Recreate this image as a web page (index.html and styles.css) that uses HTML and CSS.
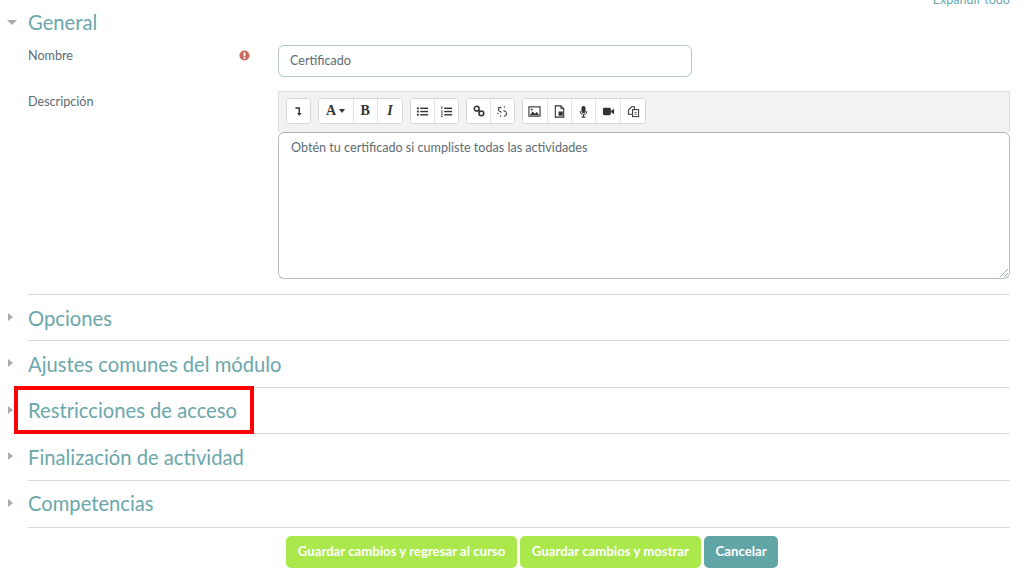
FILE: index.html
```html
<!DOCTYPE html>
<html lang="es">
<head>
<meta charset="utf-8">
<title>Certificado</title>
<link rel="stylesheet" href="styles.css">
</head>
<body>
<main class="page">
  <div class="expand"><a href="#">Expandir todo</a></div>

  <section class="sec open">
    <h2 class="sec-title"><span class="caret down"></span>General</h2>
    <div class="row row-name">
      <label class="lbl">Nombre</label>
      <span class="req"><svg viewBox="0 0 12 12" width="11" height="11"><circle cx="6" cy="6" r="5.5" fill="#ca6a5c"/><rect x="5" y="2.4" width="2" height="4.6" rx=".6" fill="#fff"/><rect x="5" y="8" width="2" height="1.8" rx=".5" fill="#fff"/></svg></span>
      <div class="field"><input class="text" type="text" value="Certificado"></div>
    </div>
    <div class="row row-desc">
      <label class="lbl">Descripción</label>
      <span class="req"></span>
      <div class="field editor">
        <div class="toolbar">
          <div class="grp">
            <button class="tb tb-one"><svg viewBox="0 0 14 14" width="12" height="12"><path d="M4 3.500h4.500v6.500" fill="none" stroke="#333" stroke-width="1.700"/><path d="M5.800 9.200h5.400L8.500 12.600z" fill="#333"/></svg></button>
          </div>
          <div class="grp">
            <button class="tb tb-wide"><span class="serif">A</span><i class="drop"></i></button>
            <button class="tb"><span class="serif bold">B</span></button>
            <button class="tb"><span class="serif ital">I</span></button>
          </div>
          <div class="grp">
            <button class="tb tb-pair"><svg viewBox="0 0 14 14" width="13" height="13"><g fill="#333"><rect x="1" y="2.500" width="2" height="2"/><rect x="1" y="6" width="2" height="2"/><rect x="1" y="9.500" width="2" height="2"/><rect x="4.500" y="2.800" width="8.500" height="1.500"/><rect x="4.500" y="6.300" width="8.500" height="1.500"/><rect x="4.500" y="9.800" width="8.500" height="1.500"/></g></svg></button>
            <button class="tb tb-pair"><svg viewBox="0 0 14 14" width="13" height="13"><g fill="#333"><rect x="1.500" y="1.500" width="1" height="3"/><rect x="1" y="6" width="2" height="1"/><rect x="1" y="8" width="2" height="1"/><rect x="1" y="10" width="2" height="1"/><rect x="1" y="12" width="2" height="1"/><rect x="4.500" y="2.800" width="8.500" height="1.500"/><rect x="4.500" y="6.300" width="8.500" height="1.500"/><rect x="4.500" y="9.800" width="8.500" height="1.500"/></g></svg></button>
          </div>
          <div class="grp">
            <button class="tb tb-pair"><svg viewBox="0 0 14 14" width="12" height="12"><g fill="none" stroke="#333" stroke-width="1.800"><circle cx="4.300" cy="4.300" r="2.800"/><circle cx="9.700" cy="9.700" r="2.800"/><path d="M5.500 5.500l3 3"/></g></svg></button>
            <button class="tb tb-pair"><svg viewBox="0 0 14 14" width="13" height="13"><g fill="none" stroke="#444" stroke-width="1.300"><path d="M3 6.500A2.700 2.700 0 0 1 5.800 2.500"/><path d="M11 8A2.700 2.700 0 0 1 8.500 12"/><path d="M8 6l3 1.500M6 8l-2.500-1.500"/><path d="M2 2l1.500 1M9 1v2M1 9h2M5 13v-2" stroke-width=".9"/></g></svg></button>
          </div>
          <div class="grp">
            <button class="tb"><svg viewBox="0 0 14 14" width="13" height="13"><rect x="1" y="2" width="12" height="10" fill="none" stroke="#333" stroke-width="1.200"/><path d="M2 11l3-4 2.500 2.500L9.500 7.500 12 11z" fill="#333"/><circle cx="4" cy="4.800" r="1" fill="#333"/></svg></button>
            <button class="tb"><svg viewBox="0 0 14 14" width="13" height="13"><path d="M2.500 1h6l3 3v9h-9z" fill="none" stroke="#333" stroke-width="1.200"/><rect x="6" y="7" width="4.500" height="4.500" fill="#333"/><path d="M8.500 1v3h3" fill="none" stroke="#333"/></svg></button>
            <button class="tb"><svg viewBox="0 0 14 14" width="13" height="13"><rect x="4.800" y="1" width="4.400" height="8" rx="2.200" fill="#333"/><path d="M3.300 6.500a3.700 3.700 0 0 0 7.400 0" fill="none" stroke="#333" stroke-width="1"/><path d="M7 10.500V13M5 13h4" stroke="#333" stroke-width="1.200"/></svg></button>
            <button class="tb"><svg viewBox="0 0 14 14" width="13" height="13"><rect x="1" y="3" width="8.500" height="8" rx="1.500" fill="#333"/><path d="M9.500 6.500L13 4v6L9.500 7.500z" fill="#333"/></svg></button>
            <button class="tb"><svg viewBox="0 0 14 14" width="13" height="13"><g fill="none" stroke="#333" stroke-width="1.100"><path d="M1.500 5.500L5 2h3v3.500"/><path d="M1.500 5.500V10h4"/><rect x="6" y="5" width="6.500" height="7.500"/><path d="M8 8h2.500M8 10h2.500" stroke-width=".8"/></g></svg></button>
          </div>
        </div>
        <div class="area">Obtén tu certificado si cumpliste todas las actividades<span class="grip"></span></div>
      </div>
    </div>
  </section>

  <section class="sec"><h2 class="sec-title"><span class="caret"></span>Opciones</h2></section>
  <section class="sec"><h2 class="sec-title"><span class="caret"></span>Ajustes comunes del módulo</h2></section>
  <section class="sec marked"><h2 class="sec-title"><span class="caret"></span>Restricciones de acceso</h2><span class="redbox"></span></section>
  <section class="sec"><h2 class="sec-title"><span class="caret"></span>Finalización de actividad</h2></section>
  <section class="sec last"><h2 class="sec-title"><span class="caret"></span>Competencias</h2></section>

  <div class="actions">
    <button class="btn green">Guardar cambios y regresar al curso</button>
    <button class="btn green">Guardar cambios y mostrar</button>
    <button class="btn teal">Cancelar</button>
  </div>
</main>
</body>
</html>
```
FILE: styles.css
```css
* { box-sizing: border-box; }
html, body { margin: 0; height: 584px; overflow: hidden; background: #fff; }
body { font-family: "Lato", "Noto Sans", sans-serif; color: #5d6b73; font-size: 13px; }
.page { padding: 0 14px 0 28px; }
.expand { height: 3px; text-align: right; line-height: 0; font-size: 12.600px; }
.expand a { color: #6aabb0; text-decoration: none; }
.sec { position: relative; height: 46.4px; border-bottom: 1px solid #d4dcdc; }
.sec.open { height: 292px; }
.sec-title { margin: 0; height: 46px; padding-bottom: 1px; display: flex; align-items: center; position: relative; font-size: 20.200px; font-weight: 400; color: #6ba7ab; white-space: nowrap; }
.sec.open .sec-title { height: 39px; padding-bottom: 2px; }
.caret { position: absolute; left: -20px; top: 50%; margin-top: -5px; width: 0; height: 0; border-left: 5px solid #a9adad; border-top: 4.500px solid transparent; border-bottom: 4.500px solid transparent; }
.caret.down { left: -21px; margin-top: -3px; border-top: 5px solid #a9adad; border-left: 5px solid transparent; border-right: 5px solid transparent; border-bottom: 0; }
.row { display: flex; align-items: flex-start; }
.row-name { height: 47px; margin-top: 3px; }
.lbl { width: 211px; font-size: 12.600px; line-height: 20px; margin-top: 1px; color: #5d6b73; }
.row-desc .lbl { margin-top: 0; }
.req { width: 39px; height: 20px; margin-top: 3px; line-height: 0; padding-top: 2px; }
.field { flex: 1; }
.text { display: block; width: 414px; height: 32px; border: 1px solid #b4c8c8; border-radius: 6px; padding: 0 11px 2px; font: 12.600px "Lato", sans-serif; color: #5d6b73; background: #fff; }
.editor { display: flex; flex-direction: column; margin-top: -1px; }
.toolbar { height: 41px; background: #f2f2f2; border: 1px solid #dcdcdc; border-bottom: 0; padding: 6px 0 0 6.500px; display: flex; gap: 7px; align-items: flex-start; }
.grp { display: flex; height: 26px; border: 1px solid #d6d6d6; border-radius: 4px; background: #fff; overflow: hidden; }
.tb { width: 24.400px; height: 24px; border: 0; border-right: 1px solid #e2e2e2; background: #fff; padding: 0; display: flex; align-items: center; justify-content: center; gap: 3px; }
.tb:last-child { border-right: 0; }
.tb-one { width: 23px; }
.tb-pair { width: 23.500px; }
.tb-wide { width: 35px; }
.serif { font: 700 14px "Liberation Serif", serif; color: #333; }
.serif.ital { font-style: italic; }
.drop { width: 0; height: 0; border-top: 4px solid #333; border-left: 3.500px solid transparent; border-right: 3.500px solid transparent; }
.area { position: relative; height: 147px; border: 1px solid #b3c0c0; border-top-color: #a8b4b4; border-radius: 6px; padding: 6px 12px; font-size: 12.600px; line-height: 18px; color: #5d6b73; }
.grip { position: absolute; right: 1px; bottom: 1px; width: 10px; height: 10px; background: repeating-linear-gradient(135deg, transparent 0 2px, #a8b4b4 2px 3px); clip-path: polygon(100% 0, 100% 100%, 0 100%); }
.redbox { position: absolute; left: -14px; top: -2px; width: 240px; height: 48px; border: 4px solid #f00; }
.sec.last { height: 47px; }
.actions { display: flex; justify-content: flex-start; gap: 3px; padding: 8px 0 0 258px; }
.btn { height: 32px; padding: 0 11.800px 1px; border: 0; border-radius: 5px; color: #fff; font: 700 13.200px "Lato", sans-serif; white-space: nowrap; }
.green { background: #abe84c; }
.teal { background: #62a5a6; }
```
